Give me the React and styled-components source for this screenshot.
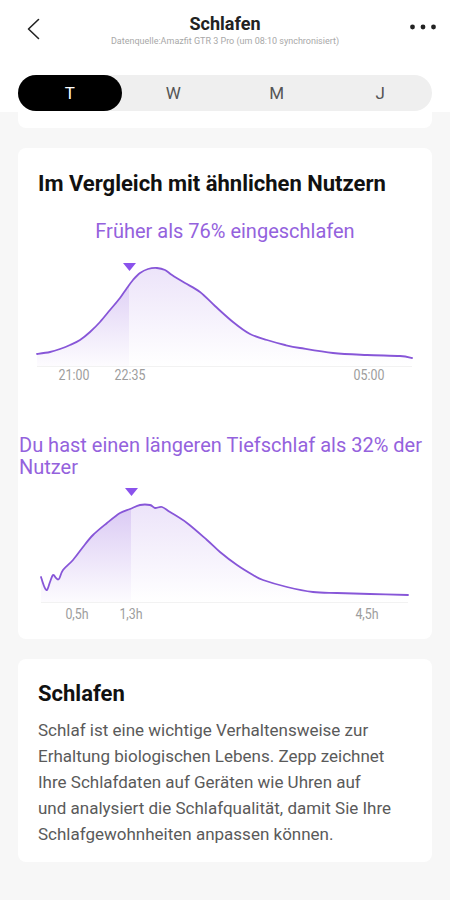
import React from "react";
import styled, { createGlobalStyle } from "styled-components";

const GlobalStyle = createGlobalStyle`
	html, body {
		margin: 0;
		padding: 0;
		background: #f7f7f7;
	}
	body {
		font-family: Roboto, "Noto Sans", "Liberation Sans", sans-serif;
		-webkit-font-smoothing: antialiased;
	}
`;

const Page = styled.div`
	width: 450px;
	min-height: 900px;
	background: #f7f7f7;
`;

const Header = styled.header`
	background: #fff;
	padding: 13px 18px 1px;
`;

const TopBar = styled.div`
	display: grid;
	grid-template-columns: 1fr auto 1fr;
	align-items: start;
`;

const IconButton = styled.div`
	display: flex;
	justify-content: ${(p) => (p.$side === "right" ? "flex-end" : "flex-start")};
	padding-top: ${(p) => (p.$side === "right" ? "11px" : "5px")};
	padding-left: ${(p) => (p.$side === "right" ? "0" : "9px")};
	margin-right: ${(p) => (p.$side === "right" ? "-5px" : "0")};
`;

const TitleBlock = styled.div`
	text-align: center;
`;

const Title = styled.h1`
	margin: 0;
	font-size: 18px;
	line-height: 22px;
	font-weight: 700;
	color: #222;
`;

const Subtitle = styled.div`
	font-size: 9px;
	line-height: 12px;
	color: #a8a8a8;
`;

const Tabs = styled.div`
	display: flex;
	margin-top: 28px;
	height: 36px;
	border-radius: 18px;
	background: #efefef;
`;

const Tab = styled.div`
	flex: 1;
	display: flex;
	align-items: center;
	justify-content: center;
	border-radius: 18px;
	font-size: 17px;
	color: ${(p) => (p.$active ? "#fff" : "#555")};
	background: ${(p) => (p.$active ? "#000" : "transparent")};
`;

const Content = styled.main`
	padding: 0 18px 20px;
	display: flex;
	flex-direction: column;
	gap: 20px;
`;

const CardStub = styled.div`
	height: 16px;
	background: #fff;
	border-radius: 0 0 8px 8px;
`;

const Card = styled.section`
	background: #fff;
	border-radius: 8px;
	padding: ${(p) => p.$padding || "22px 0 17px"};
`;

const CardTitle = styled.h2`
	margin: 0;
	padding: 0 20px;
	font-size: 22px;
	line-height: 28px;
	font-weight: 700;
	color: #111;
`;

const Lead = styled.p`
	margin: ${(p) => p.$margin};
	padding: 0 1px;
	font-size: 20px;
	line-height: ${(p) => (p.$align === "center" ? "24px" : "22px")};
	color: #9462dd;
	text-align: ${(p) => p.$align};
`;

const ChartWrap = styled.div`
	margin-top: ${(p) => p.$top}px;
`;

const ChartSvg = styled.svg`
	display: block;
	width: 100%;
`;

const LabelRow = styled.div`
	position: relative;
	height: 16px;
`;

const AxisLabel = styled.span`
	position: absolute;
	top: 0;
	transform: translateX(-50%) scaleX(0.8);
	font-size: 15.5px;
	line-height: 16px;
	font-weight: 400;
	color: #9d9d9d;
	white-space: nowrap;
`;

const Body = styled.p`
	margin: 9px 0 0;
	padding: 0 20px;
	font-size: 17px;
	line-height: 26px;
	color: #5a5a5a;
`;

const CARD_X = 18;

function smoothPath(pts) {
	let d = `M${pts[0][0]},${pts[0][1]}`;
	for (let i = 0; i < pts.length - 1; i++) {
		const p0 = pts[i - 1] || pts[i];
		const p1 = pts[i];
		const p2 = pts[i + 1];
		const p3 = pts[i + 2] || p2;
		const c1x = p1[0] + (p2[0] - p0[0]) / 6;
		const c1y = p1[1] + (p2[1] - p0[1]) / 6;
		const c2x = p2[0] - (p3[0] - p1[0]) / 6;
		const c2y = p2[1] - (p3[1] - p1[1]) / 6;
		d += ` C${c1x.toFixed(1)},${c1y.toFixed(1)} ${c2x.toFixed(1)},${c2y.toFixed(1)} ${p2[0]},${p2[1]}`;
	}
	return d;
}

function Chart({ id, points, top, height, baseline, marker, markerTop, labels, spacing }) {
	// page coords -> local svg coords
	const pts = points.map(([x, y]) => [x - CARD_X, y - top]);
	const base = baseline - top;
	const line = smoothPath(pts);
	const first = pts[0];
	const last = pts[pts.length - 1];
	const area = `${line} L${last[0]},${base} L${first[0]},${base} Z`;
	const mx = marker - CARD_X;
	const peak = Math.min(...pts.map((p) => p[1]));
	const mt = markerTop - top;

	return (
		<ChartWrap $top={spacing}>
			<ChartSvg viewBox={`0 0 414 ${height}`} height={height}>
				<defs>
					<linearGradient id={`${id}-l`} x1="0" y1={peak} x2="0" y2={base} gradientUnits="userSpaceOnUse">
						<stop offset="0" stopColor="#8a55dc" stopOpacity="0.32" />
						<stop offset="1" stopColor="#8a55dc" stopOpacity="0.02" />
					</linearGradient>
					<linearGradient id={`${id}-r`} x1="0" y1={peak} x2="0" y2={base} gradientUnits="userSpaceOnUse">
						<stop offset="0" stopColor="#8a55dc" stopOpacity="0.16" />
						<stop offset="1" stopColor="#8a55dc" stopOpacity="0" />
					</linearGradient>
					<clipPath id={`${id}-cl`}>
						<rect x="0" y="0" width={mx} height={height} />
					</clipPath>
					<clipPath id={`${id}-cr`}>
						<rect x={mx} y="0" width={414 - mx} height={height} />
					</clipPath>
				</defs>
				<line x1={first[0]} y1={base + 0.5} x2={last[0]} y2={base + 0.5} stroke="#f2f2f2" strokeWidth="1" />
				<path d={area} fill={`url(#${id}-l)`} clipPath={`url(#${id}-cl)`} />
				<path d={area} fill={`url(#${id}-r)`} clipPath={`url(#${id}-cr)`} />
				<path d={line} fill="none" stroke="#8756d8" strokeWidth="1.8" strokeLinejoin="round" strokeLinecap="round" />
				<polygon points={`${mx - 6},${mt} ${mx + 7},${mt} ${mx + 0.5},${mt + 8}`} fill="#8a52ec" />
			</ChartSvg>
			<LabelRow>
				{labels.map((l) => (
					<AxisLabel key={l.text} style={{ left: l.x - CARD_X }}>{l.text}</AxisLabel>
				))}
			</LabelRow>
		</ChartWrap>
	);
}

const bedtimePoints = [
	[37, 354], [50, 352], [60, 349], [70, 345], [80, 340], [90, 332], [100, 322],
	[110, 310], [120, 298], [127, 288], [133, 280], [140, 273], [148, 269], [157, 268],
	[165, 270], [172, 275], [185, 283], [200, 292], [215, 306], [233, 322], [250, 334],
	[267, 340], [285, 345], [300, 348], [333, 353], [367, 355], [400, 356], [412, 358],
];

const deepPoints = [
	[41, 577], [44, 586], [47, 590], [50, 582], [53, 575], [56, 578], [59, 579],
	[63, 570], [73, 560], [83, 547], [93, 535], [107, 523], [120, 513], [130, 509],
	[140, 505], [150, 505], [155, 508], [162, 507], [170, 512], [187, 523], [207, 540],
	[220, 552], [237, 565], [253, 575], [263, 580], [287, 587], [313, 592], [337, 593],
	[370, 594], [408, 595],
];

function BackIcon() {
	return (
		<svg width="14" height="22" viewBox="0 0 14 22">
			<polyline points="11.5,1.5 1.5,11 11.5,20.5" fill="none" stroke="#222" strokeWidth="1.6" strokeLinecap="round" strokeLinejoin="round" />
		</svg>
	);
}

function MoreIcon() {
	return (
		<svg width="28" height="6" viewBox="0 0 28 6">
			<circle cx="3.5" cy="3" r="2.4" fill="#222" />
			<circle cx="14" cy="3" r="2.4" fill="#222" />
			<circle cx="24.5" cy="3" r="2.4" fill="#222" />
		</svg>
	);
}

export default function App() {
	const tabs = ["T", "W", "M", "J"];
	return (
		<Page>
			<GlobalStyle />
			<Header>
				<TopBar>
					<IconButton $side="left"><BackIcon /></IconButton>
					<TitleBlock>
						<Title>Schlafen</Title>
						<Subtitle>Datenquelle:Amazfit GTR 3 Pro (um 08:10 synchronisiert)</Subtitle>
					</TitleBlock>
					<IconButton $side="right"><MoreIcon /></IconButton>
				</TopBar>
				<Tabs>
					{tabs.map((t, i) => (
						<Tab key={t} $active={i === 0}>{t}</Tab>
					))}
				</Tabs>
			</Header>
			<Content>
				<CardStub />
				<Card>
					<CardTitle>Im Vergleich mit ähnlichen Nutzern</CardTitle>
					<Lead $align="center" $margin="21px 0 0">Früher als 76% eingeschlafen</Lead>
					<Chart
						id="bed"
						points={bedtimePoints}
						top={255}
						height={112}
						baseline={366}
						marker={129}
						markerTop={263}
						spacing={12}
						labels={[
							{ x: 74, text: "21:00" },
							{ x: 130, text: "22:35" },
							{ x: 369, text: "05:00" },
						]}
					/>
					<Lead $align="left" $margin="51px 0 0">Du hast einen längeren Tiefschlaf als 32% der Nutzer</Lead>
					<Chart
						id="deep"
						points={deepPoints}
						top={484}
						height={122}
						baseline={602}
						marker={131}
						markerTop={488}
						spacing={6}
						labels={[
							{ x: 77, text: "0,5h" },
							{ x: 131, text: "1,3h" },
							{ x: 367, text: "4,5h" },
						]}
					/>
				</Card>
				<Card $padding="21px 0 15px">
					<CardTitle>Schlafen</CardTitle>
					<Body>
						Schlaf ist eine wichtige Verhaltensweise zur<br />
						Erhaltung biologischen Lebens. Zepp zeichnet<br />
						Ihre Schlafdaten auf Geräten wie Uhren auf<br />
						und analysiert die Schlafqualität, damit Sie Ihre<br />
						Schlafgewohnheiten anpassen können.
					</Body>
				</Card>
			</Content>
		</Page>
	);
}
